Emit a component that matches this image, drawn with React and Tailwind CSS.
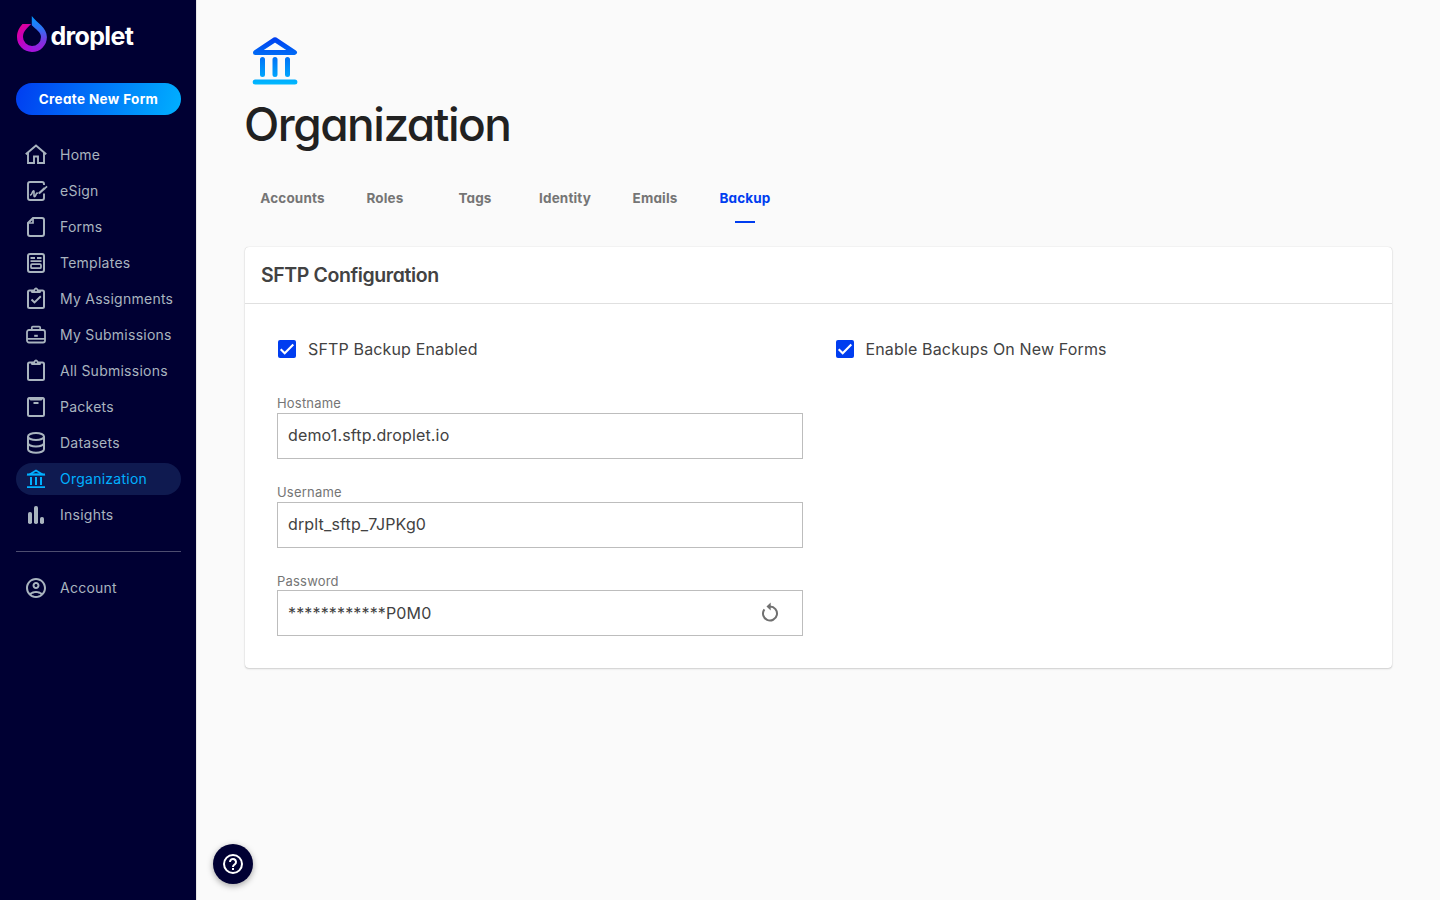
import React from 'react';
import { MdOutlineAccountCircle } from 'react-icons/md';

const GEO = "font-['Inter',sans-serif] [font-feature-settings:'cv11'_1]";

function Icon({ children }) {
  return (
    <svg viewBox="0 0 24 24" className="size-6 shrink-0" fill="none" stroke="currentColor" strokeWidth="2">
      {children}
    </svg>
  );
}

const icons = {
  home: (
    <Icon>
      <path d="M1.8 11.3 12 2.6l10.2 8.7" strokeWidth="2" />
      <path d="M4 9.5V20h6v-6.500h4V20h6V9.5" strokeWidth="1.9" />
    </Icon>
  ),
  esign: (
    <Icon>
      <path d="M20 6V5a2 2 0 0 0-2-2H6a2 2 0 0 0-2 2v14a2 2 0 0 0 2 2h12a2 2 0 0 0 2-2v-4.500" strokeWidth="1.9" />
      <path d="M6 16.300c1.200-.3 1.800-1.200 2.200-2.600.6-2 1.800-2.500 1.800-.7v3.800c0 1.300 1 1.300 1.500 0l.9-2.200c.5-1 1-.7 1.200.3" strokeWidth="1.600" />
      <path d="m14.800 14.500 6-5.300" strokeWidth="2.300" />
      <path d="m20.500 9.600 2.600-2.200" strokeWidth="1.700" />
    </Icon>
  ),
  forms: (
    <Icon>
      <path d="M9 3h9a2 2 0 0 1 2 2v14a2 2 0 0 1-2 2H6a2 2 0 0 1-2-2V8z" strokeWidth="2" />
      <path d="M9 3v5H4" strokeWidth="1.700" />
    </Icon>
  ),
  templates: (
    <Icon>
      <rect x="4" y="3" width="16" height="18" rx="2" strokeWidth="2" />
      <path d="M6.500 7H11M13 7h4.500M6.500 10.200h11" strokeWidth="1.800" />
      <rect x="7" y="13.200" width="10" height="4" rx="1" strokeWidth="1.700" />
    </Icon>
  ),
  assignments: (
    <Icon>
      <rect x="4" y="3.500" width="16" height="17.500" rx="1.500" strokeWidth="2" />
      <path d="M7 3h2.500C10 1.500 10.800.5 12 .5S14 1.500 14.500 3H17v1.500c0 1-.6 1.600-1.600 1.600H8.600C7.600 6.100 7 5.500 7 4.500z" fill="currentColor" stroke="none" />
      <circle cx="12" cy="3.300" r=".9" fill="#000033" stroke="none" />
      <path d="m7.500 12.500 3 3 6.300-6.200" strokeWidth="1.900" />
    </Icon>
  ),
  submissions: (
    <Icon>
      <rect x="3" y="7" width="18" height="12.500" rx="2" strokeWidth="1.800" />
      <path d="M7.800 7V4.600A1 1 0 0 1 8.800 3.600h6.400a1 1 0 0 1 1 1V7M3 15.800h18" strokeWidth="1.700" />
      <path d="M10.200 12.800h3.600" strokeWidth="2" />
    </Icon>
  ),
  all: (
    <Icon>
      <rect x="4" y="3.500" width="16" height="17.500" rx="1.500" strokeWidth="2" />
      <path d="M7 3h2.500C10 1.500 10.800.5 12 .5S14 1.500 14.500 3H17v1.500c0 1-.6 1.600-1.600 1.600H8.600C7.600 6.100 7 5.500 7 4.500z" fill="currentColor" stroke="none" />
      <circle cx="12" cy="3.300" r=".9" fill="#000033" stroke="none" />
    </Icon>
  ),
  packets: (
    <Icon>
      <rect x="4" y="3" width="16" height="18" rx="1.500" strokeWidth="2" />
      <path d="M4.500 2.500h15v1L17.500 5.600h-11L4.500 3.500z" fill="currentColor" stroke="none" />
      <path d="M9.500 8h5" strokeWidth="2" />
    </Icon>
  ),
  datasets: (
    <Icon>
      <g strokeWidth="2">
        <ellipse cx="12" cy="5.500" rx="8" ry="3.500" />
        <path d="M4 5.500v12.800C4 20.200 7.600 21.800 12 21.800s8-1.600 8-3.500V5.500M4 12c0 1.900 3.600 3.500 8 3.500s8-1.600 8-3.500" />
      </g>
    </Icon>
  ),
  organization: (
    <Icon>
      <path d="M5.500 7.500 12 3.600l6.500 3.900z" strokeWidth="1.700" />
      <path d="M3 7.500h18M3 20.100h18" strokeWidth="1.900" />
      <path d="M7 10v8M12 10v8M17 10v8" />
    </Icon>
  ),
  insights: (
    <Icon>
      <g fill="currentColor" stroke="none">
        <rect x="4" y="9" width="4" height="12" rx="1.800" />
        <rect x="10" y="3" width="4" height="18" rx="1.800" />
        <rect x="16" y="14" width="4" height="7" rx="1.800" />
      </g>
    </Icon>
  ),
  account: <MdOutlineAccountCircle className="size-6 shrink-0" />,
};

const nav = [
  ['Home', 'home'],
  ['eSign', 'esign'],
  ['Forms', 'forms'],
  ['Templates', 'templates'],
  ['My Assignments', 'assignments'],
  ['My Submissions', 'submissions'],
  ['All Submissions', 'all'],
  ['Packets', 'packets'],
  ['Datasets', 'datasets'],
  ['Organization', 'organization'],
  ['Insights', 'insights'],
];

function NavItem({ label, icon, active }) {
  return (
    <a
      className={`flex h-8 items-center gap-3 rounded-full pl-2 text-sm tracking-[0.25px] whitespace-nowrap ${
        active ? 'bg-[#0f1a50] text-[#00b0ff]' : 'text-[#a9b4bf]'
      }`}
    >
      {icons[icon]}
      <span>{label}</span>
    </a>
  );
}

function Logo() {
  return (
    <div className="flex h-9 items-center">
      <svg viewBox="16 16 32 36" className="h-9 w-8 shrink-0">
        <defs>
          <linearGradient id="dropRight" x1="0" y1="0" x2="0" y2="1">
            <stop offset="0" stopColor="#0098ff" />
            <stop offset=".35" stopColor="#2f72f5" />
            <stop offset=".7" stopColor="#7a35e0" />
            <stop offset="1" stopColor="#a812dc" />
          </linearGradient>
          <linearGradient id="dropLeft" x1="0" y1="0" x2=".5" y2="1">
            <stop offset="0" stopColor="#ec008c" />
            <stop offset=".5" stopColor="#c800b8" />
            <stop offset="1" stopColor="#a812dc" />
          </linearGradient>
        </defs>
        <path d="M31.800 16C37 23 46.900 27.500 46.900 37A15 15 0 0 1 31.800 52V46A9 9 0 0 0 41 37C41 32 36 29.500 31.800 25.200Z" fill="url(#dropRight)" />
        <path d="M22.500 24H31.200C27 28.500 23 31 23 37A9 9 0 0 0 32 46V52A15 15 0 0 1 17 37C17 31.500 19.700 27 22.500 24Z" fill="url(#dropLeft)" />
      </svg>
      <span className={`${GEO} ml-[2.5px] pt-[3px] text-[25px] leading-9 font-bold tracking-[-0.65px] text-white`}>droplet</span>
    </div>
  );
}

function Sidebar() {
  return (
    <aside className="flex h-full w-[197px] shrink-0 flex-col border-r border-[#e6e6e6] bg-[#000033] pt-4 pr-[15px] pl-4">
      <Logo />
      <button
        className={`${GEO} mt-[31px] h-8 shrink-0 rounded-full bg-[linear-gradient(105deg,#003df0,#00b0ff)] pt-px text-[13.5px] font-bold tracking-[0.35px] text-white`}
      >
        Create New Form
      </button>
      <nav className="mt-6 flex flex-col gap-1">
        {nav.map(([label, icon]) => (
          <NavItem key={label} label={label} icon={icon} active={label === 'Organization'} />
        ))}
      </nav>
      <div className="mt-5 mb-5 h-px shrink-0 bg-[#4d4d70]" />
      <NavItem label="Account" icon="account" />
    </aside>
  );
}

function Checkbox({ label }) {
  return (
    <label className="flex h-6 flex-1 items-center gap-3 text-base tracking-[0.15px] text-[#424242]">
      <span className="ml-px flex size-[18px] items-center justify-center rounded-[2px] bg-[#003df0]">
        <svg viewBox="0 0 18 18" className="size-[18px]" fill="none" stroke="#fff" strokeWidth="2.1">
          <path d="m2.700 9.200 4 4 8.600-8.700" />
        </svg>
      </span>
      <span>{label}</span>
    </label>
  );
}

function Field({ label, value, children }) {
  return (
    <div className="flex flex-col">
      <span className="h-[17px] pt-[0.4px] text-[13px] leading-[15px] tracking-[0.2px] text-[#757575]">{label}</span>
      <div className="flex h-[46px] items-center justify-between border border-[#bdbdbd] pr-5 pl-[10px] text-base tracking-[0.15px] text-[#424242]">
        <span className="pb-[1.2px]">{value}</span>
        {children}
      </div>
    </div>
  );
}

const tabs = ['Accounts', 'Roles', 'Tags', 'Identity', 'Emails', 'Backup'];

export default function App() {
  return (
    <div className="flex h-screen overflow-hidden bg-[#fafafa] font-['Inter',sans-serif]">
      <Sidebar />
      <main className="relative flex-1 pt-[30px] pr-12 pl-12">
        <svg viewBox="0 0 60 60" className="size-[60px]" fill="none" strokeLinecap="round" strokeLinejoin="round">
          <defs>
            <linearGradient id="bank" gradientUnits="userSpaceOnUse" x1="30" y1="7" x2="30" y2="54">
              <stop offset="0" stopColor="#003df0" />
              <stop offset="1" stopColor="#00b8ff" />
            </linearGradient>
          </defs>
          <g stroke="url(#bank)" strokeWidth="5">
            <path d="M10.500 22.500 30 9.700l19.500 12.800z" />
            <path d="M17.500 29.500v15M30 29.500v15M42.500 29.500v15M10.200 52h39.700" />
          </g>
        </svg>
        <h1 className={`${GEO} -ml-px mt-1 h-[60px] text-[46px] leading-[60px] font-medium tracking-[-1.5px] text-[#212121]`}>Organization</h1>
        <div className={`${GEO} mt-[21px] flex h-12 text-[13.5px] font-bold tracking-[0.15px]`}>
          {tabs.map((t) => (
            <div
              key={t}
              className={`flex flex-col items-center first:w-[95px] w-[90px] ${t === 'Backup' ? 'text-[#003df0]' : 'text-[#757575]'}`}
            >
              <span className="flex h-[46px] items-center pt-px">{t}</span>
              {t === 'Backup' && <span className="h-0.5 w-5 bg-[#003df0]" />}
            </div>
          ))}
        </div>
        <section className="mt-6 h-[421px] rounded-[4px] bg-white shadow-[0_1px_2px_rgba(0,0,0,0.16),0_0_1px_rgba(0,0,0,0.24)]">
          <h2 className={`${GEO} flex h-[57px] items-center border-b border-[#e0e0e0] px-4 pt-px text-[19.5px] font-semibold tracking-[-0.4px] text-[#424242]`}>
            SFTP Configuration
          </h2>
          <div className="px-8 pt-[33px]">
            <div className="flex gap-8">
              <Checkbox label="SFTP Backup Enabled" />
              <Checkbox label="Enable Backups On New Forms" />
            </div>
            <div className="mt-[35px] flex w-[526px] flex-col gap-[25.6px]">
              <Field label="Hostname" value="demo1.sftp.droplet.io" />
              <Field label="Username" value="drplt_sftp_7JPKg0" />
              <Field label="Password" value="************P0M0">
                <svg viewBox="0 0 24 24" className="size-6" fill="none" stroke="#707070" strokeWidth="2">
                  <path d="M6.400 8.300A7 7 0 1 0 12 5.500" />
                  <path d="M12.700 1.500v8l-4.200-4z" fill="#707070" stroke="none" />
                </svg>
              </Field>
            </div>
          </div>
        </section>
        <button className="absolute bottom-4 left-4 flex size-10 items-center justify-center rounded-full bg-[#000033] shadow-[0_2px_6px_rgba(0,0,0,0.35)]">
          <svg viewBox="0 0 24 24" className="size-6" fill="none" stroke="#fff" strokeWidth="2">
            <circle cx="12" cy="12" r="9" />
            <path d="M9 10a3 3 0 1 1 4.900 2.300c-1 .8-1.900 1.300-1.900 2.700" />
            <path d="M12 16v2" />
          </svg>
        </button>
      </main>
    </div>
  );
}
